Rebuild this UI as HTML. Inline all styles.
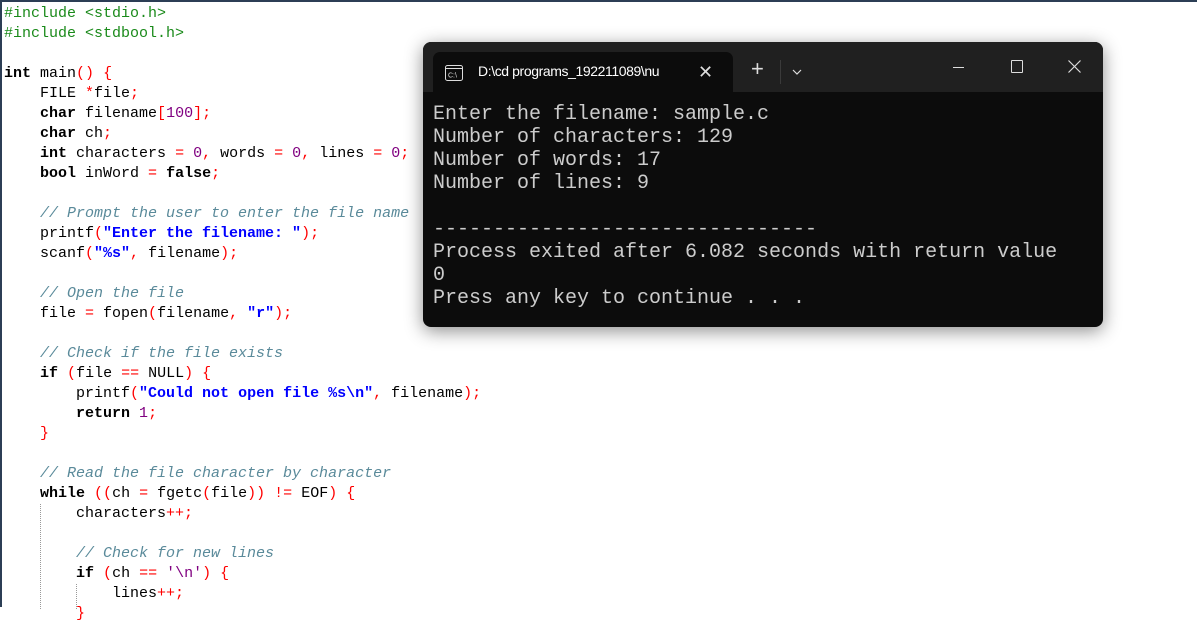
<!DOCTYPE html>
<html><head><meta charset="utf-8"><style>
body{margin:0;width:1197px;height:607px;overflow:hidden;background:#fff;position:relative;font-family:"Liberation Mono",monospace}
.frame{position:absolute;left:0;top:0;width:1197px;height:607px;border-left:2px solid #2c3e55;border-top:2px solid #2c3e55;box-sizing:border-box}
.code{position:absolute;left:4px;top:4px;font-size:15px;line-height:20px;white-space:pre;color:#000}
.pp{color:#1a8a1a}.o{color:#f00}.n{color:#800080}.s{color:#0000ff;font-weight:bold}.c{color:#5a8a9a;font-style:italic}.k{font-weight:bold}
.guide{position:absolute;border-left:1px dotted #999}
.term{position:absolute;left:423px;top:42px;width:680px;height:285px;background:#0c0c0c;border-radius:8px;box-shadow:0 4px 18px rgba(0,0,0,.45);overflow:hidden}
.bar{position:absolute;left:0;top:0;width:680px;height:50px;background:#202020}
.tab{position:absolute;left:10px;top:10px;width:300px;height:40px;background:#0c0c0c;border-radius:7px 7px 0 0}
.tt{position:absolute;left:45px;top:11px;color:#fff;font:14px "Liberation Sans",sans-serif;letter-spacing:-.4px}
.out{position:absolute;left:10px;top:61px;color:#cccccc;font-size:20px;line-height:23px;white-space:pre}
.ic{position:absolute;color:#ddd;font-family:"Liberation Sans",sans-serif}
</style></head><body>
<div class="frame"></div>
<div class="guide" style="left:40px;top:504px;height:105px"></div>
<div class="guide" style="left:76px;top:584px;height:25px"></div>
<div class="code"><span class="pp">#include &lt;stdio.h&gt;</span>
<span class="pp">#include &lt;stdbool.h&gt;</span>

<span class="k">int</span> main<span class="o">()</span> <span class="o">{</span>
    FILE <span class="o">*</span>file<span class="o">;</span>
    <span class="k">char</span> filename<span class="o">[</span><span class="n">100</span><span class="o">];</span>
    <span class="k">char</span> ch<span class="o">;</span>
    <span class="k">int</span> characters <span class="o">=</span> <span class="n">0</span><span class="o">,</span> words <span class="o">=</span> <span class="n">0</span><span class="o">,</span> lines <span class="o">=</span> <span class="n">0</span><span class="o">;</span>
    <span class="k">bool</span> inWord <span class="o">=</span> <span class="k">false</span><span class="o">;</span>

    <span class="c">// Prompt the user to enter the file name</span>
    printf<span class="o">(</span><span class="s">"Enter the filename: "</span><span class="o">);</span>
    scanf<span class="o">(</span><span class="s">"%s"</span><span class="o">,</span> filename<span class="o">);</span>

    <span class="c">// Open the file</span>
    file <span class="o">=</span> fopen<span class="o">(</span>filename<span class="o">,</span> <span class="s">"r"</span><span class="o">);</span>

    <span class="c">// Check if the file exists</span>
    <span class="k">if</span> <span class="o">(</span>file <span class="o">==</span> NULL<span class="o">)</span> <span class="o">{</span>
        printf<span class="o">(</span><span class="s">"Could not open file %s\n"</span><span class="o">,</span> filename<span class="o">);</span>
        <span class="k">return</span> <span class="n">1</span><span class="o">;</span>
    <span class="o">}</span>

    <span class="c">// Read the file character by character</span>
    <span class="k">while</span> <span class="o">((</span>ch <span class="o">=</span> fgetc<span class="o">(</span>file<span class="o">))</span> <span class="o">!=</span> EOF<span class="o">)</span> <span class="o">{</span>
        characters<span class="o">++;</span>

        <span class="c">// Check for new lines</span>
        <span class="k">if</span> <span class="o">(</span>ch <span class="o">==</span> <span class="n">'\n'</span><span class="o">)</span> <span class="o">{</span>
            lines<span class="o">++;</span>
        <span class="o">}</span></div>
<div class="term">
 <div class="bar"></div>
 <div class="tab">
  <svg style="position:absolute;left:12px;top:13px" width="18" height="16" viewBox="0 0 18 16"><rect x="0.5" y="0.5" width="17" height="15" rx="2" fill="none" stroke="#ddd"/><line x1="1" y1="3.5" x2="17" y2="3.5" stroke="#ddd"/><text x="3" y="12.5" fill="#ddd" font-size="7" font-family="Liberation Sans">C:\</text></svg>
  <div class="tt">D:\cd programs_192211089\nu</div>
  <div class="ic" style="left:265px;top:10px;font-size:18px">✕</div>
 </div>
 <div class="ic" style="left:328px;top:16px;font-size:22px;line-height:22px">+</div>
 <div style="position:absolute;left:357px;top:18px;width:1px;height:24px;background:#3a3a3a"></div>
 <svg style="position:absolute;left:369px;top:27px" width="10" height="6"><path d="M1 1 L5 5 L9 1" fill="none" stroke="#ddd" stroke-width="1.2"/></svg>
 <div style="position:absolute;left:530px;top:25px;width:11px;height:1px;background:#ddd"></div>
 <div style="position:absolute;left:588px;top:18px;width:10px;height:11px;border:1px solid #ddd;border-radius:1px"></div>
 <svg style="position:absolute;left:645px;top:18px" width="13" height="13"><path d="M0.5 0.5 L12.5 12.5 M12.5 0.5 L0.5 12.5" stroke="#ddd" stroke-width="1.2"/></svg>
 <div class="out">Enter the filename: sample.c
Number of characters: 129
Number of words: 17
Number of lines: 9

--------------------------------
Process exited after 6.082 seconds with return value
0
Press any key to continue . . .</div>
</div>
</body></html>
